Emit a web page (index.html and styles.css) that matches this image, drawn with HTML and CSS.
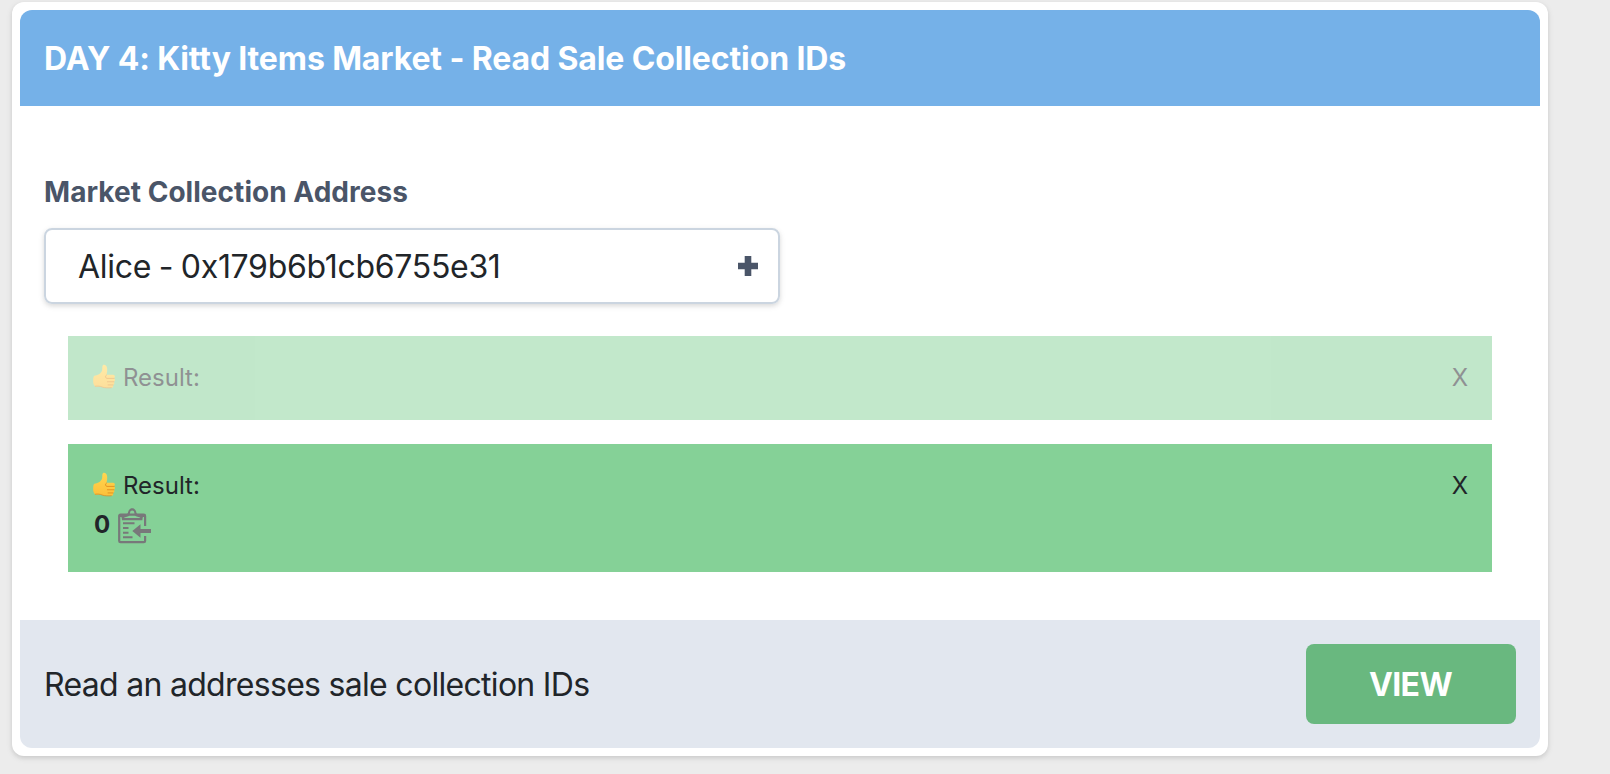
FILE: index.html
```html
<!DOCTYPE html>
<html lang="en">
<head>
<meta charset="utf-8">
<title>Kitty Items Market</title>
<link rel="stylesheet" href="styles.css">
</head>
<body>
<svg class="defs" width="0" height="0" aria-hidden="true">
  <defs>
    <linearGradient id="skin" x1="0" y1="0" x2="0" y2="1">
      <stop offset="0" stop-color="#ffd650"/>
      <stop offset="1" stop-color="#fdc03a"/>
    </linearGradient>
    <symbol id="thumb" viewBox="0 0 24 26">
      <path fill="url(#skin)" d="M1.500 12.200C4.500 12 8.600 10 9.500 6.500C9.900 4.500 9.300 2 10.500 1.100C12 .3 14.200 1.500 14.700 4.200C15.100 6.700 14.500 9 14.200 11.200L21 11.300C23.200 11.500 23.500 14.100 21.900 14.800C23.500 15.600 23.300 18.100 21.700 18.500C22.800 19.400 22.500 21.500 20.900 21.800C21.600 23.300 20.800 24.800 18.900 24.800L13.500 24.700C10.500 24.700 8.500 23.600 6.500 23.500L3 23.700C.8 23.100 0 20 .2 16.500C.3 14 .7 12.500 1.500 12.200Z"/>
      <path fill="none" stroke="#dd8419" stroke-width=".8" stroke-linecap="round" d="M14 11.500C12.600 12.200 12.600 14.500 14.500 15H22M15 18.500H21.700M15.700 21.800H20.900"/>
      <path fill="none" stroke="#d98a25" stroke-width=".8" d="M2 23.200C5 22.800 7.500 23 9.500 24C12.500 25 16 25 19.500 24.700"/>
    </symbol>
  </defs>
</svg>
<main class="card">
  <header class="card-header"><h1 class="title">DAY 4: Kitty Items Market - Read Sale Collection IDs</h1></header>
  <section class="card-body">
    <div class="label"><span>Market Collection Address</span></div>
    <div class="select">
      <span class="select-value">Alice <span class="dash">-</span> 0x179b6b1cb6755e31</span>
      <svg class="plus" width="20" height="20" viewBox="0 0 20 20"><path fill="#4a5568" d="M6.700 0h6.600v6.700H20v6.600h-6.700V20H6.700v-6.700H0V6.700h6.700z"/></svg>
    </div>
    <div class="results">
      <div class="result faded">
        <div class="result-head">
          <svg class="thumb"><use href="#thumb"/></svg>
          <span class="result-label">Result:</span>
          <span class="close">X</span>
        </div>
      </div>
      <div class="result">
        <div class="result-head">
          <svg class="thumb"><use href="#thumb"/></svg>
          <span class="result-label">Result:</span>
          <span class="close">X</span>
        </div>
        <div class="result-data">
          <span class="value">0</span>
          <svg class="clipboard" width="34" height="36" viewBox="0 0 34 36">
            <path fill="none" stroke="#78787a" stroke-width="2.200" d="M27.100 18V8Q27.100 6.700 25.800 6.700H2.500Q1.200 6.700 1.200 8V33Q1.200 34.200 2.500 34.200H25.800Q27.100 34.200 27.100 33V28"/>
            <path fill="none" stroke="#78787a" stroke-width="2" d="M5 15.300H16.500M5 20H10.500M5 24.700H10.500M5 29.300H14.500"/>
            <path fill="#78787a" fill-rule="evenodd" d="M1.500 6H8C10.300 6 9.800 4.800 10.200 3.800C10.800 1.500 12.300 .3 14.200 .3S17.600 1.500 18.200 3.800C18.600 4.800 18.100 6 20.400 6H27V9H25C24.700 9.700 24.500 10.500 24.400 12.200H4C3.900 10.500 3.700 9.700 3.400 9H1.500ZM6 10H22.400C22 9.400 20.700 9.200 19.600 8.800C17 8.300 16.700 6.700 16.400 4.900C16.100 3.300 15.500 2.500 14.200 2.500S12.300 3.300 12 4.900C11.700 6.700 11.400 8.300 8.800 8.800C7.700 9.200 6.400 9.400 6 10Z"/>
            <path fill="#78787a" d="M14.300 23L22.500 16.300V21H33V25H22.500V29.700Z"/>
          </svg>
        </div>
      </div>
    </div>
  </section>
  <footer class="card-footer">
    <span class="description">Read an addresses sale collection IDs</span>
    <button class="view" type="button"><span>VIEW</span></button>
  </footer>
</main>
</body>
</html>
```
FILE: styles.css
```css
* { box-sizing: border-box; }
body {
  margin: 0;
  padding: 2px 62px 18px 12px;
  background: #ececec;
  color: #212529;
  font-family: Inter, "Liberation Sans", sans-serif;
  font-size: 32px;
  overflow: hidden;
}
.defs { position: absolute; }
.card {
  height: 754px;
  padding: 8px;
  background: #fff;
  border-radius: 12px;
  box-shadow: 0 2px 6px rgba(0,0,0,.1), 0 2px 4px rgba(0,0,0,.06);
}
.card-header {
  display: flex;
  align-items: center;
  height: 96px;
  padding: 2px 24px 0;
  background: #75b1e8;
  border-radius: 12px 12px 0 0;
}
.title {
  margin: 0;
  color: #fff;
  font-size: 32px;
  font-weight: 700;
  line-height: 48px;
  letter-spacing: -.12px;
  white-space: nowrap;
}
.card-body { height: 514px; padding: 64px 24px 0; }
.label {
  height: 58px;
  padding-top: 1px;
  color: #4a5568;
  font-size: 28px;
  font-weight: 700;
  line-height: 42px;
  letter-spacing: .04px;
}
.select {
  display: flex;
  align-items: center;
  justify-content: space-between;
  width: 736px;
  height: 76px;
  padding: 0 20px 0 32px;
  border: 2px solid #cbd5e0;
  border-radius: 8px;
  box-shadow: 0 2px 6px rgba(0,0,0,.1), 0 2px 4px rgba(0,0,0,.06);
}
.select-value { padding-top: 1px; letter-spacing: -.3px; }
.dash { margin: 0 -1px; }
.results { display: grid; gap: 24px; padding: 32px 24px 0; }
.result { padding: 24px; background: #85d197; font-size: 24px; }
.faded { opacity: .5; }
.result-head { display: flex; height: 36px; line-height: 36px; }
.thumb { width: 23px; height: 25px; margin: 4px 7px 0 1px; }
.result-label { letter-spacing: 0; }
.close { margin-left: auto; }
.result-data { display: flex; align-items: flex-start; height: 44px; padding-left: 2px; }
.value { width: 24px; font-weight: 700; line-height: 42px; }
.clipboard { margin-top: 4px; }
.card-footer {
  display: flex;
  align-items: center;
  justify-content: space-between;
  height: 128px;
  padding: 0 24px;
  background: #e2e7ef;
  border-radius: 0 0 12px 12px;
}
.description { letter-spacing: -.7px; }
.view {
  width: 210px;
  height: 80px;
  padding: 0 1px 0 0;
  border: 0;
  border-radius: 8px;
  background: #69b87f;
  color: #fff;
  font: 700 32px Inter, sans-serif;
  letter-spacing: -.6px;
}
```
